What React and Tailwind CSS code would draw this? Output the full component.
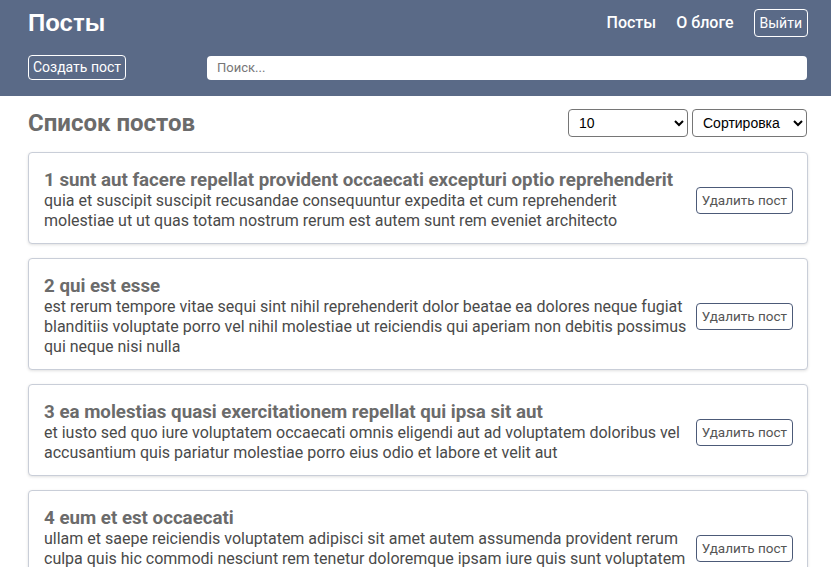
import React, { useState } from "react";

const posts = [
  {
    id: 1,
    title: "sunt aut facere repellat provident occaecati excepturi optio reprehenderit",
    body: "quia et suscipit suscipit recusandae consequuntur expedita et cum reprehenderit molestiae ut ut quas totam nostrum rerum est autem sunt rem eveniet architecto",
  },
  {
    id: 2,
    title: "qui est esse",
    body: "est rerum tempore vitae sequi sint nihil reprehenderit dolor beatae ea dolores neque fugiat blanditiis voluptate porro vel nihil molestiae ut reiciendis qui aperiam non debitis possimus qui neque nisi nulla",
  },
  {
    id: 3,
    title: "ea molestias quasi exercitationem repellat qui ipsa sit aut",
    body: "et iusto sed quo iure voluptatem occaecati omnis eligendi aut ad voluptatem doloribus vel accusantium quis pariatur molestiae porro eius odio et labore et velit aut",
  },
  {
    id: 4,
    title: "eum et est occaecati",
    body: "ullam et saepe reiciendis voluptatem adipisci sit amet autem assumenda provident rerum culpa quis hic commodi nesciunt rem tenetur doloremque ipsam iure quis sunt voluptatem rerum illo velit",
  },
];

const PostItem = ({ post }) => {
  return (
    <div className="flex items-center justify-between gap-2 rounded border border-[#c9ced8] bg-white pl-[15px] pr-[14px] pt-[17px] pb-[12px] shadow-[0_1px_3px_rgba(0,0,0,0.12)]">
      <div className="flex-1">
        <div className="text-[18.72px] font-bold leading-[21px] text-[#6b6b6b]">
          {post.id} {post.title}
        </div>
        <div className="text-[16px] leading-[20px] text-[#4a4a4a]">{post.body}</div>
      </div>
      <button className="shrink-0 rounded border border-[#4c5a78] bg-white px-[5px] py-[4px] text-[13.5px] leading-[17px] text-[#555]">
        Удалить пост
      </button>
    </div>
  );
};

export default function App() {
  const [search, setSearch] = useState("");

  return (
    <div className="min-h-screen bg-white font-['Roboto',sans-serif]">
      <div className="bg-[#5a6a87] pl-7 pr-[23px] pt-[9px] pb-[16px]">
        <div className="flex h-[28px] items-center justify-between">
          <div className="font-['Liberation_Sans',sans-serif] text-[24px] font-bold leading-[28px] text-white">Посты</div>
          <div className="flex items-center">
            <a className="mr-5 text-[16px] font-medium text-white">Посты</a>
            <a className="mr-5 text-[16px] font-medium text-white">О блоге</a>
            <button className="h-[28px] rounded border border-white px-[5px] text-[14px] leading-[18px] text-white">
              Выйти
            </button>
          </div>
        </div>
        <div className="mt-[18px] flex h-[25px] items-center">
          <button className="h-[25px] w-[98px] rounded border border-white text-[14px] leading-[17px] text-white">
            Создать пост
          </button>
          <input
            value={search}
            onChange={(e) => setSearch(e.target.value)}
            placeholder="Поиск..."
            className="ml-[81px] mr-[1px] h-[24px] flex-1 rounded-sm bg-white px-[10px] text-[13px] text-[#333] placeholder:text-[#777] outline-none"
          />
        </div>
      </div>

      <div className="pl-7 pr-[23px]">
        <div className="mt-[13px] mb-[15px] flex h-[28px] items-center justify-between">
          <h1 className="text-[24px] font-bold leading-[28px] text-[#6b6b6b]">Список постов</h1>
          <div className="flex gap-1">
            <select className="h-[28px] w-[120px] rounded border border-[#767676] bg-white px-[6px] font-['Liberation_Sans',sans-serif] text-[14px] text-black">
              <option>10</option>
              <option>25</option>
              <option>-1</option>
            </select>
            <select className="mr-[1px] h-[28px] w-[115px] rounded border border-[#767676] bg-white px-[6px] font-['Liberation_Sans',sans-serif] text-[14px] text-black">
              <option>Сортировка</option>
              <option>По названию</option>
              <option>По описанию</option>
            </select>
          </div>
        </div>
        <div className="flex flex-col gap-[14px]">
          {posts.map((post) => (
            <PostItem key={post.id} post={post} />
          ))}
        </div>
      </div>
    </div>
  );
}
